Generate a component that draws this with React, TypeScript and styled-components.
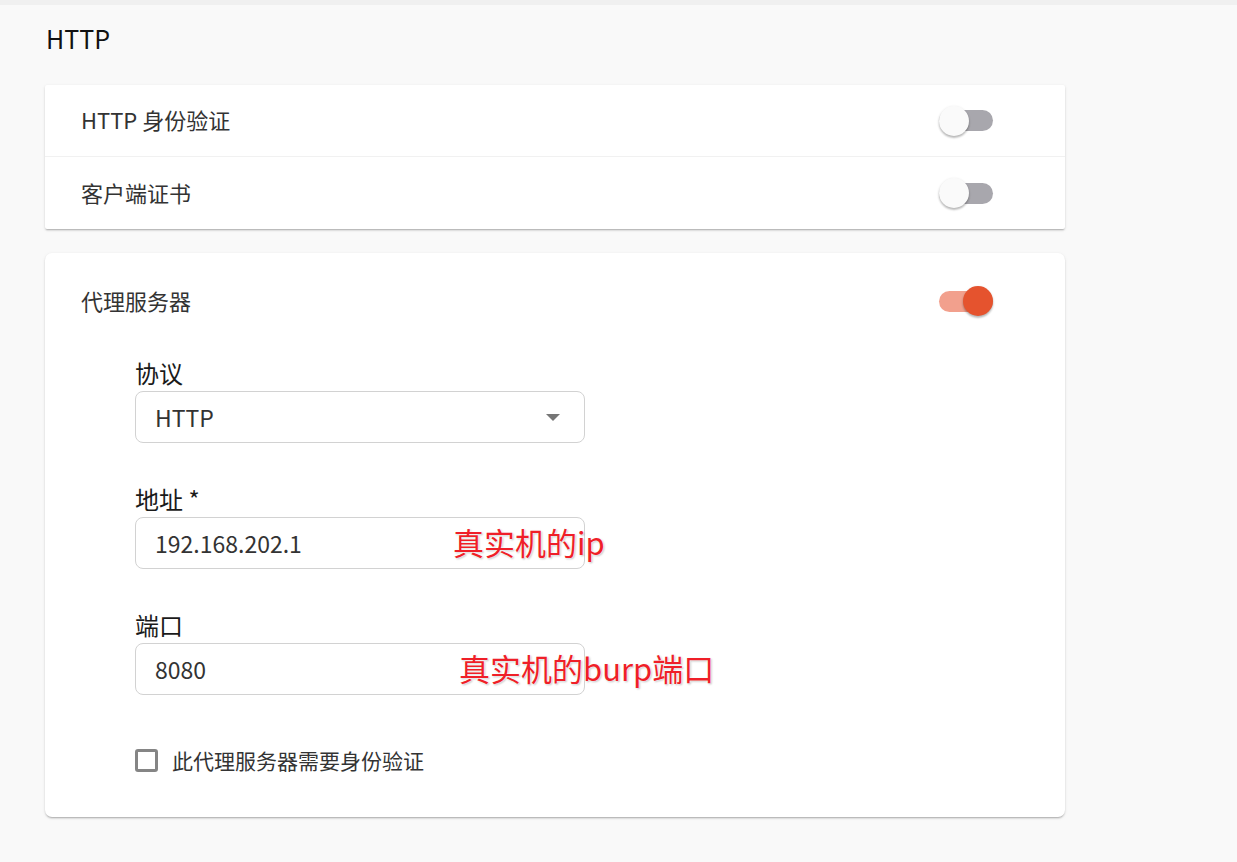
import React, { useState } from "react";
import styled, { createGlobalStyle } from "styled-components";

const Global = createGlobalStyle`
  html, body { margin: 0; padding: 0; }
  body {
    background: #f9f9f9;
    font-family: "Noto Sans CJK SC", "Noto Sans", sans-serif;
    color: #333;
  }
`;

const TopStrip = styled.div`
  height: 5px;
  background: #f0f0f0;
`;

const Page = styled.div`
  padding: 15px 0 40px 45px;
  width: 1020px;
`;

const Heading = styled.h2`
  margin: 0 0 29px 1px;
  font-size: 25px;
  line-height: 36px;
  font-weight: 400;
  color: #111;
`;

const Card = styled.div<{ $radius: number }>`
  background: #fff;
  border-radius: ${(p) => p.$radius}px;
  box-shadow: 0 2px 2px -1px rgba(0, 0, 0, 0.22), 0 1px 2px rgba(0, 0, 0, 0.1),
    0 1px 4px rgba(0, 0, 0, 0.06);
  margin-bottom: 24px;
`;

const Row = styled.div<{ $height: number; $divider?: boolean }>`
  height: ${(p) => p.$height}px;
  display: flex;
  align-items: center;
  justify-content: space-between;
  padding: 0 72px 0 36px;
  border-top: ${(p) => (p.$divider ? "1px solid #f1f1f1" : "none")};
`;

const RowLabel = styled.span`
  font-size: 22px;
  color: #333;
  margin-bottom: 3px;
`;

const SwitchBox = styled.button`
  position: relative;
  width: 54px;
  height: 30px;
  padding: 0;
  border: none;
  background: transparent;
  cursor: pointer;
`;

const Track = styled.span<{ $on: boolean }>`
  position: absolute;
  left: 0;
  top: 4.5px;
  width: 54px;
  height: 21px;
  border-radius: 11px;
  background: ${(p) => (p.$on ? "#f2a08d" : "#a8a7ad")};
`;

const Thumb = styled.span<{ $on: boolean }>`
  position: absolute;
  top: 0;
  left: ${(p) => (p.$on ? 24 : 0)}px;
  width: 30px;
  height: 30px;
  border-radius: 50%;
  background: ${(p) => (p.$on ? "#e5532e" : "#fafafa")};
  box-shadow: 0 2px 2px rgba(0, 0, 0, 0.2), 0 1px 3px rgba(0, 0, 0, 0.14);
`;

const Switch: React.FC<{ on: boolean; onToggle: () => void }> = ({ on, onToggle }) => (
  <SwitchBox onClick={onToggle} aria-pressed={on}>
    <Track $on={on} />
    <Thumb $on={on} />
  </SwitchBox>
);

const Form = styled.div`
  display: flex;
  flex-direction: column;
  gap: 40px;
  padding: 8px 0 42px 90px;
`;

const Field = styled.div`
  display: flex;
  flex-direction: column;
  width: 450px;
`;

const FieldLabel = styled.label`
  font-size: 24px;
  line-height: 32px;
  color: #1a1a1a;
  margin-bottom: 2px;
`;

const InputWrap = styled.div`
  position: relative;
`;

const Box = styled.div`
  height: 50px;
  border: 1px solid #d2d2d2;
  border-radius: 8px;
  display: flex;
  align-items: center;
  justify-content: space-between;
  padding: 0 24px 0 19px;
  font-size: 23px;
  color: #333;
  background: #fff;
`;

const Caret = styled.span`
  width: 0;
  height: 0;
  border-left: 7px solid transparent;
  border-right: 7px solid transparent;
  border-top: 7px solid #767676;
  margin-top: 1px;
`;

const Note = styled.span<{ $left: number }>`
  position: absolute;
  left: ${(p) => p.$left}px;
  top: 50%;
  transform: translateY(-54%);
  white-space: nowrap;
  font-size: 31px;
  font-weight: 400;
  color: #ef1f28;
  text-shadow: 0 0 2px #fff, 0 0 2px #fff, 1px 1px 2px rgba(0, 0, 0, 0.3);
`;

const CheckRow = styled.label`
  display: flex;
  align-items: center;
  gap: 14px;
  margin-top: 10px;
  height: 30px;
  cursor: pointer;
`;

const CheckSquare = styled.span<{ $checked: boolean }>`
  width: 17px;
  height: 17px;
  border: 3px solid #858585;
  border-radius: 3px;
  background: ${(p) => (p.$checked ? "#858585" : "#fff")};
`;

const CheckText = styled.span`
  font-size: 21px;
  color: #333;
`;

export default function App() {
  const [auth, setAuth] = useState(false);
  const [cert, setCert] = useState(false);
  const [proxy, setProxy] = useState(true);
  const [needAuth, setNeedAuth] = useState(false);

  return (
    <>
      <Global />
      <TopStrip />
      <Page>
        <Heading>HTTP</Heading>
        <Card $radius={2}>
          <Row $height={71}>
            <RowLabel>HTTP 身份验证</RowLabel>
            <Switch on={auth} onToggle={() => setAuth(!auth)} />
          </Row>
          <Row $height={72} $divider>
            <RowLabel>客户端证书</RowLabel>
            <Switch on={cert} onToggle={() => setCert(!cert)} />
          </Row>
        </Card>
        <Card $radius={7}>
          <Row $height={96}>
            <RowLabel>代理服务器</RowLabel>
            <Switch on={proxy} onToggle={() => setProxy(!proxy)} />
          </Row>
          <Form>
            <Field>
              <FieldLabel>协议</FieldLabel>
              <InputWrap>
                <Box>
                  <span>HTTP</span>
                  <Caret />
                </Box>
              </InputWrap>
            </Field>
            <Field>
              <FieldLabel>地址 *</FieldLabel>
              <InputWrap>
                <Box>192.168.202.1</Box>
                <Note $left={318}>真实机的ip</Note>
              </InputWrap>
            </Field>
            <Field>
              <FieldLabel>端口</FieldLabel>
              <InputWrap>
                <Box>8080</Box>
                <Note $left={324}>真实机的burp端口</Note>
              </InputWrap>
            </Field>
            <CheckRow onClick={() => setNeedAuth(!needAuth)}>
              <CheckSquare $checked={needAuth} />
              <CheckText>此代理服务器需要身份验证</CheckText>
            </CheckRow>
          </Form>
        </Card>
      </Page>
    </>
  );
}
